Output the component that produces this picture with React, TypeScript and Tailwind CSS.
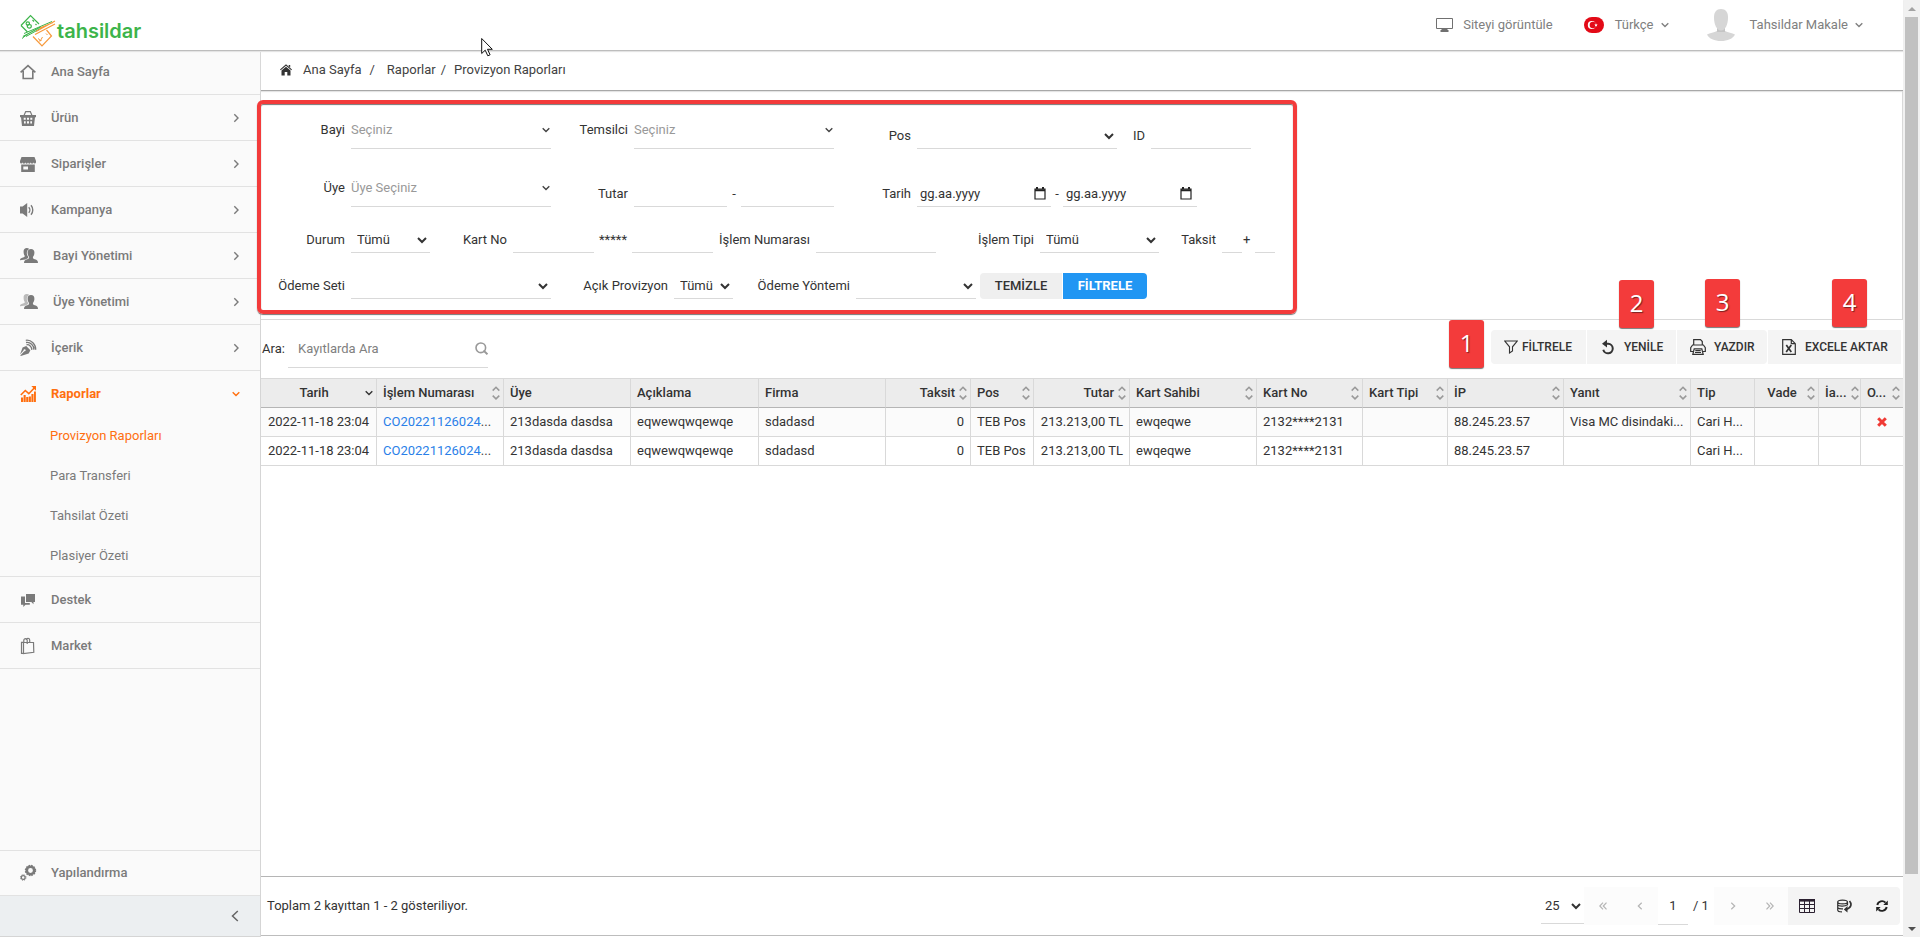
import React from 'react';

type IconProps = { className?: string };

/* ---------- icons ---------- */

const ChevronDown: React.FC<IconProps> = ({ className = '' }) => (
  <svg viewBox="0 0 8 6" className={`w-2 h-1.5 shrink-0 ${className}`} fill="none" stroke="currentColor" strokeWidth="1.4">
    <path d="M.7 1.2 4 4.5l3.3-3.3" />
  </svg>
);

const ChevronRight: React.FC<IconProps> = ({ className = '' }) => (
  <svg viewBox="0 0 6 10" className={`w-1.5 h-2.5 shrink-0 ${className}`} fill="none" stroke="currentColor" strokeWidth="1.4">
    <path d="M1.3 1.3 5 5 1.3 8.700" />
  </svg>
);

const SortIcon = () => (
  <svg viewBox="0 0 8 14" className="w-2 h-3.5 shrink-0" fill="none" stroke="#999" strokeWidth="1.5">
    <path d="M.7 4.6 4 1.3l3.3 3.3M.7 9.6 4 12.9l3.3-3.3" />
  </svg>
);

const HomeIcon = () => (
  <svg viewBox="0 0 18 18" className="w-[18px] h-[18px]" fill="none" stroke="currentColor" strokeWidth="1.6">
    <path d="M.6 9.3 8 2.6l7.4 6.7M3.2 8v7.5h9.6V8" />
  </svg>
);

const BasketIcon = () => (
  <svg viewBox="0 0 18 18" className="w-[18px] h-[18px]" fill="currentColor" fillRule="evenodd">
    <path d="M4 6.500 5.700 2.600h4.600L12 6.500" fill="none" stroke="currentColor" strokeWidth="1.2" />
    <path d="M0 6h16v2.200h-1L14 17H2L1 8.200H0zM3.700 8.800v2h2v-2zm3.300 0v2h2v-2zm3.300 0v2h2v-2zM4 12.200v2.400h1.700v-2.400zm3 0v2.400h2v-2.400zm3.300 0v2.400H12v-2.400z" />
  </svg>
);

const StoreIcon = () => (
  <svg viewBox="0 0 18 18" className="w-[18px] h-[18px]" fill="currentColor" fillRule="evenodd">
    <path d="M1.5 2h13L16 6v1.3a1.3 1.3 0 0 1-2.6 0 1.3 1.3 0 0 1-2.7 0 1.3 1.3 0 0 1-2.7 0 1.3 1.3 0 0 1-2.7 0 1.3 1.3 0 0 1-2.7 0A1.3 1.3 0 0 1 0 7.3V6z" />
    <path d="M1.2 9.5h13.6V17H1.2zM3.3 11.500v3H8v-3z" />
  </svg>
);

const SpeakerIcon = () => (
  <svg viewBox="0 0 18 18" className="w-[18px] h-[18px]" fill="currentColor">
    <path d="M0 5.500h2.600L7.200 2v14l-4.600-3.500H0z" />
    <path d="M8.700 6.200a4 4 0 0 1 0 5.600M11 4.200a7.400 7.400 0 0 1 0 9.600" fill="none" stroke="currentColor" strokeWidth="1.4" />
  </svg>
);

const UsersIcon: React.FC<{ faded?: boolean }> = ({ faded = false }) => (
  <svg viewBox="0 0 20 18" className="w-5 h-[18px]" fill="currentColor">
    <path opacity={faded ? 0.5 : 1} d="M3.6 4.8C3.4 2.5 4.7 1 6.8 1c1 0 1.9.3 2.4.9-1.8.9-2.6 2.600-2.300 4.900.1 1.200.6 2.200 1.300 3v1.300L5.400 12.600 0 13.200c0-1.600 1.100-2 3-2.600 1.300-.4 1.900-.8 1.700-1.900C4 7.800 3.600 6.400 3.600 4.800z" />
    <path d="M11 2c2.300 0 3.600 1.600 3.400 4-.1 1.700-.7 3-1.500 3.900 0 1.400.5 1.800 2 2.300 2 .7 3.100 1.300 3.100 3.800H4c0-2.500 1.100-3.100 3.100-3.800 1.500-.5 2-.9 2-2.300C8.300 9 7.700 7.700 7.600 6 7.400 3.600 8.700 2 11 2z" />
  </svg>
);

const PenIcon = () => (
  <svg viewBox="0 0 18 18" className="w-[18px] h-[18px]" fill="currentColor">
    <path d="m6.200 7.100 4.200 4.100-1.700 3.300L.8 17 .3 16.500l4-4.200a1.100 1.100 0 1 0-.8-.8L0 15.500l2.600-7z" />
    <path d="M6.500 5.800c2.600-.7 5.600 2.100 5.200 5M6 3.500c4.200-.8 8.300 3 7.900 7.300M5.800 1.300C11.300.6 16 5.300 15.700 10.800" fill="none" stroke="currentColor" strokeWidth="1.3" />
  </svg>
);

const ChartIcon = () => (
  <svg viewBox="0 0 18 18" className="w-[18px] h-[18px]" fill="currentColor">
    <path d="M1 12.500h2.100V17H1zM3.600 10h2.100v7H3.600zM6.200 12h2.100v5H6.200zM8.800 11.500h2.100V17H8.800zM11.400 9h2.100v8h-2.100zM14 6.500h1.900V17H14z" />
    <path d="M.8 10 5.300 5.500l3.500 3.200 5.700-6" fill="none" stroke="currentColor" strokeWidth="1.6" />
    <path d="M11.300 1H16v4.700z" />
  </svg>
);

const ChatIcon = () => (
  <svg viewBox="0 0 18 18" className="w-[18px] h-[18px]" fill="currentColor">
    <path d="M6 3h9v8h-1.500v2.200L11.300 11H6z" />
    <path d="M1 5.500h4v6.500h4.800v1.700H5.500L3.300 16v-2.300H1z" />
  </svg>
);

const BagIcon = () => (
  <svg viewBox="0 0 18 18" className="w-[18px] h-[18px]" fill="none" stroke="currentColor" strokeWidth="1.2">
    <path d="M1.500 5.300h2v11h-2zM3.500 5.500h10l.3 9.800-10.300 1.200zM3.800 5V3.300a1.700 1.700 0 0 1 3.400 0V7M6.300 3a1.700 1.700 0 0 1 3.400.3V6" />
  </svg>
);

const GearsIcon = () => (
  <svg viewBox="0 0 18 18" className="w-[18px] h-[18px]" fill="none" stroke="currentColor">
    <circle cx="10.5" cy="6.5" r="3.7" strokeWidth="2.6" />
    <circle cx="10.5" cy="6.5" r="5.1" strokeWidth="1.2" strokeDasharray="1.6 1.07" />
    <circle cx="3.2" cy="13.5" r="1.9" strokeWidth="1.3" />
    <circle cx="3.2" cy="13.5" r="2.8" strokeWidth=".9" strokeDasharray="1.2 1" />
  </svg>
);

const LogoMark = () => (
  <svg viewBox="0 0 36 34" className="w-9 h-[34px] mr-px" fill="none" strokeWidth="1.2">
    <g stroke="#3cb44a">
      <path d="M1 11.500 10.500 1.500 19 10M1 11.500l6.500 6.500M3 22.500l17.500-9.500" />
      <path d="M4 19.500 32 7.500M7 20.500l-5 4M6 22.500 24 12.500" strokeWidth="1" />
      <ellipse cx="7.800" cy="9.500" rx="1.700" ry="1.600" />
      <ellipse cx="9.300" cy="12.300" rx="2" ry="1.800" />
      <path d="m12.500 6 1.500 1.500M15.500 10l1 1" />
    </g>
    <g stroke="#f7993b">
      <path d="M13 22.500l9 9.500 9.500-10-5-6M35 7 16 17.500M35 10 15 20.500M33 8.500 20 14" />
      <path d="M18 24.500l2.500 2 2-3.500M26 19.500l1.500 1.500M19 27l2.500-.5" strokeWidth="1" />
    </g>
  </svg>
);

/* ---------- sidebar ---------- */

interface MenuItem {
  label: string;
  icon: React.ReactNode;
  arrow?: boolean;
}

const topMenu: MenuItem[] = [
  { label: 'Ürün', icon: <BasketIcon />, arrow: true },
  { label: 'Siparişler', icon: <StoreIcon />, arrow: true },
  { label: 'Kampanya', icon: <SpeakerIcon />, arrow: true },
  { label: 'Bayi Yönetimi', icon: <UsersIcon />, arrow: true },
  { label: 'Üye Yönetimi', icon: <UsersIcon faded />, arrow: true },
  { label: 'İçerik', icon: <PenIcon />, arrow: true },
];

const reportMenu = ['Provizyon Raporları', 'Para Transferi', 'Tahsilat Özeti', 'Plasiyer Özeti'];

const bottomMenu: MenuItem[] = [
  { label: 'Destek', icon: <ChatIcon /> },
  { label: 'Market', icon: <BagIcon /> },
];

const MenuLink: React.FC<{ item: MenuItem; className?: string }> = ({ item, className = 'h-[46px]' }) => (
  <a href="#" className={`flex items-center gap-[13px] pl-5 pr-[21px] border-b border-[#e2e2e2] font-medium ${className}`}>
    {item.icon}
    <span className="flex-1">{item.label}</span>
    {item.arrow && <ChevronRight />}
  </a>
);

const Sidebar = () => (
  <nav className="w-[261px] shrink-0 flex flex-col bg-[#fafafa] border-r border-[#d5d5d5] text-[#7a7a7a]">
    <MenuLink item={{ label: 'Ana Sayfa', icon: <HomeIcon /> }} className="h-11 pb-0.5" />
    {topMenu.map((item) => (
      <MenuLink key={item.label} item={item} />
    ))}
    <div className="border-b border-[#e2e2e2]">
      <a href="#" className="flex items-center gap-[13px] h-[45px] pl-5 pr-5 font-bold text-[#ff6f0f]">
        <ChartIcon />
        <span className="flex-1">Raporlar</span>
        <ChevronDown />
      </a>
      <ul>
        {reportMenu.map((label, i) => (
          <li key={label}>
            <a href="#" className={`flex items-center h-10 pl-[50px] ${i === 0 ? 'text-[#ff6f0f]' : ''}`}>{label}</a>
          </li>
        ))}
      </ul>
    </div>
    {bottomMenu.map((item) => (
      <MenuLink key={item.label} item={item} />
    ))}
    <div className="mt-auto border-t border-[#e2e2e2]">
      <MenuLink item={{ label: 'Yapılandırma', icon: <GearsIcon /> }} className="h-[45px]" />
      <button aria-label="Menüyü daralt" className="flex items-center justify-end w-full h-[41px] pr-[21px] bg-[#eceff1] border-b border-[#d5d5d5]">
        <svg viewBox="0 0 8 12" className="w-2 h-3" fill="none" stroke="#666" strokeWidth="1.5">
          <path d="M6.800 1 1.500 6l5.300 5" />
        </svg>
      </button>
    </div>
  </nav>
);

/* ---------- header ---------- */

const Header = () => (
  <header className="relative z-10 flex items-center h-[51px] shrink-0 pl-5 pr-10 bg-white border-b border-[#bdbdbd] shadow-[0_1px_1px_#e4e4e4] text-[#808080]">
    <a href="#" className="flex items-center pt-3 text-xl leading-5 font-semibold text-[#3cb44a] font-['Inter',sans-serif]">
      <LogoMark />
      tahsildar
    </a>
    <div className="flex items-center ml-auto">
      <a href="#" className="flex items-center gap-2.5 mr-[31px]">
        <svg viewBox="0 0 17 14" className="w-[17px] h-3.5" fill="none" stroke="#707070">
          <path d="M.5.500h16v10H.5z" />
          <path d="M5.500 11h6v1h1v2h-8v-2h1z" fill="#707070" stroke="none" />
        </svg>
        Siteyi görüntüle
      </a>
      <button className="flex items-center mr-[38px]">
        <svg viewBox="0 0 20 16" className="w-5 h-4 mr-[11px]">
          <rect width="20" height="16" rx="8" fill="#e30a17" />
          <circle cx="7.800" cy="8" r="4" fill="#fff" />
          <circle cx="8.900" cy="8" r="3.200" fill="#e30a17" />
          <path d="m12 6.300.5 1.100 1.200.1-.9.8.3 1.200-1.100-.6-1.100.6.300-1.200-.9-.8 1.200-.1z" fill="#fff" />
        </svg>
        <span className="mr-[7px]">Türkçe</span>
        <ChevronDown />
      </button>
      <button className="flex items-center">
        <svg viewBox="0 0 28 32" className="w-7 h-8 mr-[15px]" fill="#d6d6d6">
          <path d="M0 25.500c3-1.800 7-1.700 10-3.500h8c3 1.800 7 1.700 10 3.500-2 4.300-7.500 6.500-14 6.500S2 29.800 0 25.500z" />
          <path d="M10 18h8v5h-8z" fill="#c4c4c4" />
          <path d="M14 0c4.600 0 7 3 7 8.500C21 15 18.500 21.500 14 21.500S7 15 7 8.500C7 3 9.400 0 14 0z" />
        </svg>
        <span className="mr-[7px]">Tahsildar Makale</span>
        <ChevronDown />
      </button>
    </div>
    {/* mouse pointer */}
    <svg viewBox="0 0 13 20" className="absolute left-[481px] top-[37px] w-[13px] h-5" fill="#fff" stroke="#111">
      <path d="M.7 1.500v15l3.500-3.300 2.600 5.600 2.300-1-2.600-5.500h4.800z" />
    </svg>
  </header>
);

const Breadcrumb = () => (
  <div className="flex items-center h-10 shrink-0 pl-[19px] pb-0.5 bg-white border-b border-[#a8a8a8] shadow-[0_1px_1px_#e4e4e4] text-[#424242]">
    <svg viewBox="0 0 12 12" className="w-3 h-3 mr-[11px]" fill="#333">
      <path d="M6 .3 12 5.500l-.7.8L6 1.800.7 6.300 0 5.500z" />
      <path d="M6 2.800 10.500 6.600V11.500H7.300V8H4.700v3.500H1.500V6.600zM8.700 1h1.500v2.500L8.700 2.200z" />
    </svg>
    <a href="#">Ana Sayfa</a>
    <span className="ml-2 mr-3">/</span>
    <a href="#">Raporlar</a>
    <span className="ml-[5px] mr-2">/</span>
    <span>Provizyon Raporları</span>
  </div>
);

/* ---------- filter form ---------- */

interface FieldProps {
  id: string;
  label: string;
  labelWidth: string;
  width: string;
}

const underline = 'h-[26px] border-b border-[#d9d9d9]';

const FieldLabel: React.FC<{ id: string; label: string; className: string }> = ({ id, label, className }) => (
  <label htmlFor={id} className={`shrink-0 mr-1.5 flex items-center justify-end whitespace-nowrap ${className}`}>{label}</label>
);

const SelectField: React.FC<FieldProps & { value?: string }> = ({ id, label, labelWidth, width, value = '' }) => (
  <>
    <FieldLabel id={id} label={label} className={`h-[26px] ${labelWidth}`} />
    <select id={id} className={`shrink-0 px-0.5 ${underline} ${width}`}>
      <option>{value}</option>
    </select>
  </>
);

const ComboField: React.FC<FieldProps & { placeholder: string }> = ({ id, label, labelWidth, width, placeholder }) => (
  <>
    <FieldLabel id={id} label={label} className={`h-[38px] ${labelWidth}`} />
    <div className={`flex items-center shrink-0 h-[38px] pr-px border-b border-[#d9d9d9] ${width}`}>
      <select id={id} className="flex-1 h-full appearance-none text-[#999]">
        <option>{placeholder}</option>
      </select>
      <ChevronDown className="text-[#444]" />
    </div>
  </>
);

const TextField: React.FC<FieldProps> = ({ id, label, labelWidth, width }) => (
  <>
    <FieldLabel id={id} label={label} className={`h-[26px] ${labelWidth}`} />
    <input id={id} type="text" className={`shrink-0 ${underline} ${width}`} />
  </>
);

const DateInput: React.FC<{ id: string; ariaLabel: string }> = ({ id, ariaLabel }) => (
  <div className={`flex items-center shrink-0 w-[134px] pl-[3px] pr-[5px] ${underline}`}>
    <input id={id} type="text" aria-label={ariaLabel} placeholder="gg.aa.yyyy" className="flex-1 w-0 placeholder:text-[#333]" />
    <svg viewBox="0 0 12 13" className="w-3 h-[13px]" fill="none" stroke="#222" strokeWidth="1.2">
      <path d="M1 2h10v10H1z" />
      <path d="M1 3.200h10M3 0v2M9 0v2" strokeWidth="2" />
    </svg>
  </div>
);

const Separator: React.FC<{ text: string; className: string }> = ({ text, className }) => (
  <span className={`shrink-0 h-[26px] flex items-center ${className}`}>{text}</span>
);

const FilterForm = () => (
  <form className="relative shrink-0 h-[229px] border-b border-r border-[#d9d9d9]">
    <div className="flex items-end h-[58px]">
      <ComboField id="bayi" label="Bayi" labelWidth="w-[84px]" width="w-[200px]" placeholder="Seçiniz" />
      <ComboField id="temsilci" label="Temsilci" labelWidth="w-[77px]" width="w-[200px]" placeholder="Seçiniz" />
      <SelectField id="pos" label="Pos" labelWidth="w-[77px]" width="w-[200px]" />
      <TextField id="islem-id" label="ID" labelWidth="w-7" width="w-[100px]" />
    </div>
    <div className="flex items-end h-[58px]">
      <ComboField id="uye" label="Üye" labelWidth="w-[84px]" width="w-[200px]" placeholder="Üye Seçiniz" />
      <TextField id="tutar-min" label="Tutar" labelWidth="w-[77px]" width="w-[93px]" />
      <Separator text="-" className="w-3.5 justify-center" />
      <input type="text" aria-label="Tutar üst sınır" className={`shrink-0 w-[93px] ${underline}`} />
      <FieldLabel id="tarih-bas" label="Tarih" className="h-[26px] w-[77px]" />
      <DateInput id="tarih-bas" ariaLabel="Başlangıç tarihi" />
      <Separator text="-" className="w-3 justify-center" />
      <DateInput id="tarih-bit" ariaLabel="Bitiş tarihi" />
    </div>
    <div className="flex items-end h-[46px]">
      <SelectField id="durum" label="Durum" labelWidth="w-[84px]" width="w-[79px]" value="Tümü" />
      <TextField id="kart-bas" label="Kart No" labelWidth="w-[77px]" width="w-[81px]" />
      <Separator text="*****" className="w-[38px] justify-center" />
      <input type="text" aria-label="Kart numarası son haneler" className={`shrink-0 w-[81px] ${underline}`} />
      <TextField id="islem-no" label="İşlem Numarası" labelWidth="w-[97px]" width="w-[120px]" />
      <SelectField id="islem-tipi" label="İşlem Tipi" labelWidth="w-[98px]" width="w-[119px]" value="Tümü" />
      <TextField id="taksit" label="Taksit" labelWidth="w-[57px]" width="w-5" />
      <Separator text="+" className="w-[13px] pl-px" />
      <input type="text" aria-label="Ek taksit" className={`shrink-0 w-5 ${underline}`} />
    </div>
    <div className="flex items-end h-[46px]">
      <SelectField id="odeme-seti" label="Ödeme Seti" labelWidth="w-[84px]" width="w-[200px]" />
      <SelectField id="acik-provizyon" label="Açık Provizyon" labelWidth="w-[117px]" width="w-[59px]" value="Tümü" />
      <SelectField id="odeme-yontemi" label="Ödeme Yöntemi" labelWidth="w-[117px]" width="w-[120px]" />
      <button type="reset" className="ml-1 w-[82px] h-[26px] rounded-l-sm bg-[#efefef] font-medium">TEMİZLE</button>
      <button type="button" className="ml-px w-[84px] h-[26px] rounded-r-sm bg-[#2196f3] font-bold text-white">FİLTRELE</button>
    </div>
    {/* highlight frame around the filter fields */}
    <div className="pointer-events-none absolute -left-1 top-[9px] z-10 w-[1040px] h-[214px] rounded-md border-4 border-[#f33b3b] shadow-[0_1px_1px_#777,inset_0_1px_1px_#777]" />
  </form>
);

/* ---------- toolbar ---------- */

const Badge: React.FC<{ n: number; className: string }> = ({ n, className }) => (
  <span className={`absolute z-10 flex items-center justify-center w-[35px] h-12 pb-0.5 rounded-[3px] bg-[#f33b3b] font-['Open_Sans',sans-serif] font-normal text-2xl text-white shadow-[0_1px_1px_#777] [text-shadow:1px_1px_1px_#7a2020] ${className}`}>{n}</span>
);

const toolButton = 'relative flex items-center h-[34px] bg-[#f4f4f4] text-xs font-medium';

const Toolbar = () => (
  <div className="flex items-center h-[58px] shrink-0 pr-0.5">
    <label htmlFor="ara" className="ml-px w-[26px] whitespace-nowrap">Ara:</label>
    <div className="flex items-center w-[200px] h-[38px] border-b border-[#d9d9d9]">
      <input id="ara" type="text" placeholder="Kayıtlarda Ara" className="flex-1 w-0 pl-2.5 placeholder:text-[#808080]" />
      <svg viewBox="0 0 13 13" className="w-[13px] h-[13px]" fill="none" stroke="#999" strokeWidth="1.6">
        <circle cx="5.800" cy="5.800" r="4.800" />
        <path d="m8.500 8.500 4 3.800" strokeWidth="2" />
      </svg>
    </div>
    <div className="flex gap-px ml-auto mb-1">
      <button className={`${toolButton} w-[95px] pl-[13px] gap-1 rounded-l-sm`}>
        <svg viewBox="0 0 14 14" className="w-3.5 h-3.5" fill="none" stroke="#333" strokeWidth="1.1">
          <path d="M.8 1h12.400L8.500 6.800V11l-3 2V6.800z" />
        </svg>
        FİLTRELE
        <Badge n={1} className="-left-[42px] -top-2.5" />
      </button>
      <button className={`${toolButton} w-[89px] pl-[14px] gap-[9px]`}>
        <svg viewBox="0 0 14 16" className="w-3.5 h-4" fill="none" stroke="#333" strokeWidth="2">
          <path d="M4.500 4.700H7.200a4.800 4.800 0 1 1-4.900 6" />
          <path d="M1 4.700 6 .800v7.800z" fill="#333" stroke="none" />
        </svg>
        YENİLE
        <Badge n={2} className="left-8 -top-[50px]" />
      </button>
      <button className={`${toolButton} w-[90px] pl-[13px] gap-2 rounded-r-sm`}>
        <svg viewBox="0 0 16 16" className="w-4 h-4" fill="none" stroke="#333" strokeWidth="1.2">
          <path d="M3.700 6V.7h6.800l1.800 1.800V6M3 12.500H.7V8.700L2.600 6h10.800l1.900 2.700v3.800H13M4.200 9.800h7.600l1.400 5.500H2.800zM5.300 11.700h5.400M5 13.500h6" />
        </svg>
        YAZDIR
        <Badge n={3} className="left-7 -top-[51px]" />
      </button>
      <button className={`${toolButton} w-[133px] pl-[14px] gap-[9px]`}>
        <svg viewBox="0 0 14 16" className="w-3.5 h-4" fill="none" stroke="#333" strokeWidth="1.2">
          <path d="M.7.7h8.600l4 4v10.600H.7zM9.300.7v4h4" />
          <path d="m4.300 6 5 7M9.300 6l-5.100 7" strokeWidth="1.7" />
        </svg>
        EXCELE AKTAR
        <Badge n={4} className="left-16 -top-[51px]" />
      </button>
    </div>
  </div>
);

/* ---------- table ---------- */

type Align = 'left' | 'center' | 'right';

interface Column {
  title: string;
  width: string;
  align?: Align;
  sort?: 'both' | 'down';
}

const columns: Column[] = [
  { title: 'Tarih', width: 'w-[116px]', align: 'center', sort: 'down' },
  { title: 'İşlem Numarası', width: 'w-[127px]', sort: 'both' },
  { title: 'Üye', width: 'w-[127px]' },
  { title: 'Açıklama', width: 'w-[128px]' },
  { title: 'Firma', width: 'w-[127px]' },
  { title: 'Taksit', width: 'w-[85px]', align: 'right', sort: 'both' },
  { title: 'Pos', width: 'w-[63px]', sort: 'both' },
  { title: 'Tutar', width: 'w-[96px]', align: 'right', sort: 'both' },
  { title: 'Kart Sahibi', width: 'w-[127px]', sort: 'both' },
  { title: 'Kart No', width: 'w-[106px]', sort: 'both' },
  { title: 'Kart Tipi', width: 'w-[85px]', sort: 'both' },
  { title: 'İP', width: 'w-[116px]', sort: 'both' },
  { title: 'Yanıt', width: 'w-[127px]', sort: 'both' },
  { title: 'Tip', width: 'w-[64px]' },
  { title: 'Vade', width: 'w-[64px]', align: 'center', sort: 'both' },
  { title: 'İa...', width: 'w-[42px]', sort: 'both' },
  { title: 'O...', width: 'w-[42px]', sort: 'both' },
];

const rows: string[][] = [
  ['2022-11-18 23:04', 'CO20221126024...', '213dasda dasdsa', 'eqwewqwqewqe', 'sdadasd', '0', 'TEB Pos', '213.213,00 TL', 'ewqeqwe', '2132****2131', '', '88.245.23.57', 'Visa MC disindaki...', 'Cari H...', '', '', 'x'],
  ['2022-11-18 23:04', 'CO20221126024...', '213dasda dasdsa', 'eqwewqwqewqe', 'sdadasd', '0', 'TEB Pos', '213.213,00 TL', 'ewqeqwe', '2132****2131', '', '88.245.23.57', '', 'Cari H...', '', '', ''],
];

const alignClass: Record<Align, string> = {
  left: 'text-left',
  center: 'text-center',
  right: 'text-right',
};

const renderCell = (value: string, col: number) => {
  if (col === 1) {
    return (
      <a href="#" className="text-[#2a7fe8]">
        {value.slice(0, -3)}<span className="text-[#444]">...</span>
      </a>
    );
  }
  if (value === 'x') {
    return (
      <svg viewBox="0 0 10 10" className="w-2.5 h-2.5 mx-auto" stroke="#f03a35" strokeWidth="3">
        <path d="m1.200 1.200 7.600 7.600M8.800 1.200 1.200 8.800" />
      </svg>
    );
  }
  return value;
};

const ReportTable = () => (
  <table className="w-full table-fixed border-separate border-spacing-0">
    <thead>
      <tr className="h-[30px] bg-[#ececec]">
        {columns.map((c) => (
          <th key={c.title} className={`p-0 font-medium border-t border-t-[#d9d9d9] border-b border-b-[#b5b5b5] border-r border-r-[#d9d9d9] last:border-r-0 ${c.width}`}>
            <div className="flex items-center gap-1 pl-1.5 pr-[3px]">
              <span className={`flex-1 whitespace-nowrap ${alignClass[c.align ?? 'left']}`}>{c.title}</span>
              {c.sort === 'both' && <SortIcon />}
              {c.sort === 'down' && <ChevronDown />}
            </div>
          </th>
        ))}
      </tr>
    </thead>
    <tbody>
      {rows.map((row, r) => (
        <tr key={r} className="h-[29px] odd:bg-[#fbfbfb]">
          {row.map((value, c) => (
            <td key={c} className={`px-1.5 py-0 whitespace-nowrap border-b border-r border-[#d9d9d9] last:border-r-0 ${alignClass[columns[c].align ?? 'left']}`}>
              {renderCell(value, c)}
            </td>
          ))}
        </tr>
      ))}
    </tbody>
  </table>
);

/* ---------- pager ---------- */

const PagerButton: React.FC<{ label: string; path: string }> = ({ label, path }) => (
  <button aria-label={label} className="flex items-center justify-center w-[37px] h-[38px] bg-[#fcfcfc]">
    <svg viewBox="0 0 8 8" className="w-2 h-2" fill="none" stroke="#b5b5b5" strokeWidth="1.2">
      <path d={path} />
    </svg>
  </button>
);

const Pager = () => (
  <footer className="flex items-center h-[60px] shrink-0 mb-px pl-1.5 pr-[3px] border-t border-[#b5b5b5] border-b border-b-[#bdbdbd]">
    <span>Toplam 2 kayıttan 1 - 2 gösteriliyor.</span>
    <div className="flex items-center ml-auto">
      <select aria-label="Sayfa başına kayıt" className="w-[43px] h-9 border-b border-[#d9d9d9]">
        <option>25</option>
      </select>
      <PagerButton label="İlk sayfa" path="M4 .7.8 4 4 7.300M7.500.7 4.300 4l3.200 3.300" />
      <PagerButton label="Önceki sayfa" path="M5.700.7 2.300 4l3.400 3.300" />
      <input type="text" aria-label="Sayfa" defaultValue="1" className="w-[30px] h-[38px] text-center border-b border-[#d9d9d9]" />
      <span className="w-[26px] pl-[5px]">/ 1</span>
      <PagerButton label="Sonraki sayfa" path="m2.300.7 3.400 3.300-3.400 3.300" />
      <PagerButton label="Son sayfa" path="m.5.7 3.200 3.300L.5 7.300M4 .7 7.200 4 4 7.300" />
      <button aria-label="Kolonlar" className="flex items-center justify-center w-[38px] h-[38px] bg-[#f4f4f4]">
        <svg viewBox="0 0 16 14" className="w-4 h-3.5" fill="none" stroke="#2b2030">
          <path d="M.5.500h15v13H.5zM.5 5.500h15M.5 9.500h15M5.500 2v12M10.500 2v12" />
          <path d="M0 1.300h16" strokeWidth="2.6" />
        </svg>
      </button>
      <button aria-label="Veriyi yenile" className="flex items-center justify-center w-[37px] h-[38px] bg-[#f4f4f4]">
        <svg viewBox="0 0 15 14" className="w-[15px] h-3.5" fill="none" stroke="#333" strokeWidth="1.2">
          <path d="M10.500 3c0 1.100-2.200 1.900-5 1.900S.7 4.100.7 3s2-1.900 4.800-1.900 5 .8 5 1.900zM.7 3v8c0 1 2 1.900 4.300 1.900M.7 5.800c.8 1.500 7 2 9.800 0V3M.7 8.600c.8 1 3 1.500 5.300 1.300" />
          <path d="M12.500 2c2.500 3 2 7-3.500 8.300" strokeWidth="1.7" />
          <path d="M10.500 7v6.500L6.800 10.500z" fill="#333" stroke="none" />
        </svg>
      </button>
      <button aria-label="Sayfayı yenile" className="flex items-center justify-center w-[37px] h-[38px] rounded-r-sm bg-[#f4f4f4]">
        <svg viewBox="0 0 12 12" className="w-3 h-3" fill="none" stroke="#222" strokeWidth="1.9">
          <path d="M1.300 5a4.800 4.800 0 0 1 8.200-2.300M10.700 7a4.800 4.800 0 0 1-8.200 2.300" />
          <path d="M11.800.5V5H7.300zM.2 11.500V7h4.500z" fill="#222" stroke="none" />
        </svg>
      </button>
    </div>
  </footer>
);

const PageScrollbar = () => (
  <div aria-hidden="true" className="flex flex-col items-center justify-between w-[17px] shrink-0 bg-[#f1f1f1]">
    <div className="flex items-center justify-center h-[17px]">
      <svg viewBox="0 0 8 4" className="w-2 h-1" fill="#a3a3a3"><path d="M4 0l4 4H0z" /></svg>
    </div>
    <div className="flex-1 w-[13px] mb-[46px] bg-[#c1c1c1]" />
    <div className="flex items-center justify-center h-[17px]">
      <svg viewBox="0 0 8 4" className="w-2 h-1" fill="#505050"><path d="M0 0h8L4 4z" /></svg>
    </div>
  </div>
);

const App: React.FC = () => {
  return (
    <div className="flex h-screen bg-white font-['Roboto',sans-serif] text-[13px] leading-4 text-[#333]">
      <div className="flex flex-col flex-1 min-w-0">
        <Header />
        <div className="flex flex-1 min-h-0">
          <Sidebar />
          <main className="flex flex-col flex-1 min-w-0">
            <Breadcrumb />
            <FilterForm />
            <Toolbar />
            <div className="flex-1 min-h-0">
              <ReportTable />
            </div>
            <Pager />
          </main>
        </div>
      </div>
      <PageScrollbar />
    </div>
  );
};

export default App;
